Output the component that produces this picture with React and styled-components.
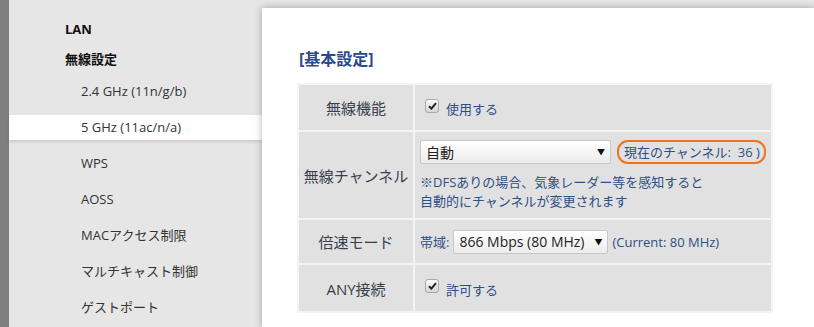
import React from "react";
import styled, { createGlobalStyle } from "styled-components";

const Global = createGlobalStyle`
  html, body { margin: 0; padding: 0; }
  body {
    font-family: "Open Sans", "Noto Sans CJK JP", sans-serif;
    background: #e6e6e6;
  }
`;

const Page = styled.div`
  display: flex;
  height: 327px;
  overflow: hidden;
  background: #e6e6e6;
`;

const Stripe = styled.div`
  width: 9px;
  flex: none;
  background: #7f7f7f;
`;

const Sidebar = styled.nav`
  width: 253px;
  flex: none;
  display: flex;
  flex-direction: column;
  padding-top: 18px;
`;

const Heading = styled.div`
  height: 22px;
  line-height: 22px;
  padding-left: 56px;
  margin-bottom: ${(p) => p.$gap}px;
  font-size: 13px;
  font-weight: 700;
  color: #111;
`;

const Item = styled.div`
  height: 25px;
  line-height: 25px;
  margin-bottom: 11px;
  padding-left: 72px;
  font-size: 13px;
  color: #333;
  background: ${(p) => (p.$active ? "#fff" : "transparent")};
  box-shadow: ${(p) => (p.$active ? "0 2px 3px rgba(0,0,0,0.12)" : "none")};
  position: relative;
`;

const Main = styled.main`
  flex: 1;
  margin-top: 8px;
  background: #fff;
  box-shadow: 0 0 7px rgba(0, 0, 0, 0.3);
  padding: 41px 0 0 35px;
  position: relative;
`;

const Title = styled.h2`
  margin: 0 0 14px 2px;
  font-size: 16px;
  line-height: 20px;
  font-weight: 700;
  color: #2b4a8c;
`;

const Table = styled.table`
  width: 476px;
  border-collapse: collapse;
  border: 2px solid #ededed;
`;

const Label = styled.th`
  width: 114px;
  height: ${(p) => p.$h}px;
  background: #e1e1e1;
  border: 2px solid #f4f4f4;
  font-weight: 400;
  font-size: 15px;
  color: #383f4c;
  text-align: center;
  padding: 0;
`;

const Cell = styled.td`
  background: #e1e1e1;
  border: 2px solid #f4f4f4;
  padding: 0 0 0 5px;
  vertical-align: middle;
  font-size: 13px;
  color: #2e4f85;
`;

const Line = styled.div`
  display: flex;
  align-items: center;
  gap: ${(p) => p.$gap || 0}px;
`;

const Check = styled.span`
  width: 14px;
  height: 14px;
  box-sizing: border-box;
  border: 1px solid #a9a9a9;
  border-radius: 3px;
  background: linear-gradient(#f8f8f8, #d6d6d6);
  display: inline-flex;
  align-items: center;
  justify-content: center;
  margin: 0 7px 0 5px;
  position: relative;
  top: -2px;
`;

const CheckText = styled.span`
  font-size: 13px;
  color: #2e4f85;
  padding-top: 2px;
`;

const Select = styled.div`
  box-sizing: border-box;
  width: ${(p) => p.$w}px;
  height: 24px;
  border: 1px solid #c8c8c8;
  border-radius: 2px;
  background: linear-gradient(#ffffff, #ececec);
  display: flex;
  align-items: center;
  justify-content: space-between;
  padding: 0 5px 0 5px;
  font-size: ${(p) => p.$fs}px;
  color: #222;
`;

const Arrow = styled.span`
  font-size: 8px;
  color: #111;
`;

const Badge = styled.div`
  box-sizing: border-box;
  height: 24px;
  margin-left: 6px;
  padding: 0 4px 0 5px;
  border: 2px solid #f0731c;
  border-radius: 11px;
  display: flex;
  align-items: center;
  font-size: 13px;
  color: #2e4f85;
  white-space: nowrap;
`;

const Note = styled.div`
  margin-top: 9px;
  font-size: 13px;
  line-height: 19px;
  color: #2e4f85;
`;

const Small = styled.span`
  font-size: 13px;
  color: #2e4f85;
  white-space: nowrap;
`;

const CheckMark = () => (
  <svg width="9" height="8" viewBox="0 0 9 8">
    <path d="M1 4.2 L3.4 6.6 L8 1.2" stroke="#222" strokeWidth="2" fill="none" />
  </svg>
);

const CheckBox = ({ label }) => (
  <Line>
    <Check>
      <CheckMark />
    </Check>
    <CheckText>{label}</CheckText>
  </Line>
);

const menu = [
  "2.4 GHz (11n/g/b)",
  "5 GHz (11ac/n/a)",
  "WPS",
  "AOSS",
  "MACアクセス制限",
  "マルチキャスト制御",
  "ゲストポート",
];

export default function App() {
  return (
    <>
      <Global />
      <Page>
        <Stripe />
        <Sidebar>
          <Heading $gap={8}>LAN</Heading>
          <Heading $gap={9}>無線設定</Heading>
          {menu.map((m) => (
            <Item key={m} $active={m.startsWith("5 GHz")}>
              {m}
            </Item>
          ))}
        </Sidebar>
        <Main>
          <Title>[基本設定]</Title>
          <Table>
            <tbody>
              <tr>
                <Label $h={45}>無線機能</Label>
                <Cell>
                  <CheckBox label="使用する" />
                </Cell>
              </tr>
              <tr>
                <Label $h={86}>無線チャンネル</Label>
                <Cell>
                  <Line>
                    <Select $w={191} $fs={14}>
                      <span>自動</span>
                      <Arrow>▼</Arrow>
                    </Select>
                    <Badge>現在のチャンネル:&nbsp; 36 )</Badge>
                  </Line>
                  <Note>
                    ※DFSありの場合、気象レーダー等を感知すると
                    <br />
                    自動的にチャンネルが変更されます
                  </Note>
                </Cell>
              </tr>
              <tr>
                <Label $h={43}>倍速モード</Label>
                <Cell>
                  <Line $gap={4}>
                    <Small>帯域:</Small>
                    <Select $w={155} $fs={14}>
                      <span>866 Mbps (80 MHz)</span>
                      <Arrow>▼</Arrow>
                    </Select>
                    <Small>(Current: 80 MHz)</Small>
                  </Line>
                </Cell>
              </tr>
              <tr>
                <Label $h={46}>ANY接続</Label>
                <Cell>
                  <CheckBox label="許可する" />
                </Cell>
              </tr>
            </tbody>
          </Table>
        </Main>
      </Page>
    </>
  );
}
